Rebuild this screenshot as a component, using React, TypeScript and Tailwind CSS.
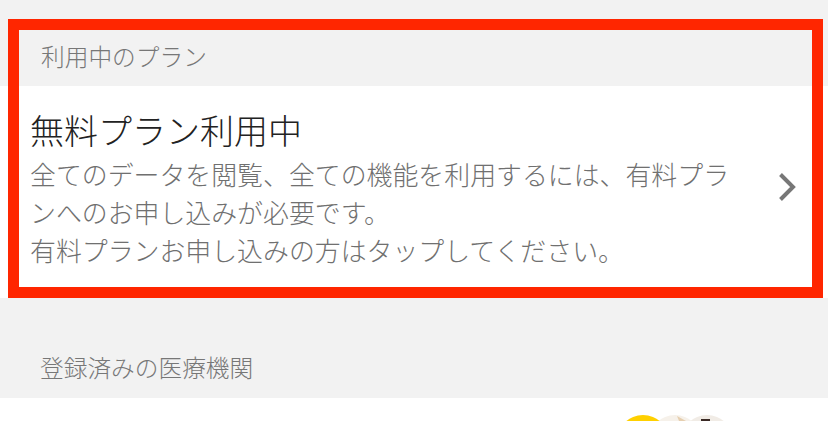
const jp = "font-['Noto_Sans_CJK_JP','Noto_Sans',sans-serif]";

export default function App() {
  return (
    <div className={`relative h-[421px] w-[828px] overflow-hidden bg-[#f2f2f2] ${jp}`}>
      <h2 className="h-[86px] pt-[38px] pl-[41px] text-[23.7px] leading-[36px] font-light text-[#777777]">利用中のプラン</h2>
      <div className="flex h-[212px] items-center bg-white pl-[30px]">
        <div className="min-w-0 flex-1 pb-[8px]">
          <p className="text-[34px] leading-[44px] font-light text-[#222222]">無料プラン利用中</p>
          <p className="mt-[3px] w-[702px] text-[25.9px] leading-[38px] font-light text-[#707070]">
            全てのデータを閲覧、全ての機能を利用するには、有料プランへのお申し込みが必要です。<br />
            有料プランお申し込みの方はタップしてください。
          </p>
        </div>
        <svg className="mr-[32px] mb-[10px] h-[28px] w-[17px] text-[#777777]" viewBox="0 0 17 28" fill="none" stroke="currentColor" strokeWidth="4">
          <path d="M1.5 1.5L14 14L1.5 26.5" />
        </svg>
      </div>
      <h2 className="h-[100px] pt-[51px] pl-[40px] text-[23.7px] leading-[36px] font-light text-[#777777]">登録済みの医療機関</h2>
      <div className="flex h-[23px] justify-end overflow-hidden bg-white pt-[17px] pr-[95px]">
        <svg className="h-[6px] w-[116px]" viewBox="0 0 116 6">
          <circle cx="90" cy="26" r="26" fill="#f1ece6" />
          <circle cx="58" cy="26" r="26" fill="#f6f1ea" />
          <path d="M60 1l9 5h-7z" fill="#e6cfb0" />
          <rect x="84" y="4" width="9" height="2" fill="#3a2a25" />
          <circle cx="26" cy="26" r="26" fill="#ffd000" />
        </svg>
      </div>
      {/* red annotation frame over the plan row */}
      <div className="pointer-events-none absolute top-[19px] left-[8px] h-[279px] w-[815px] border-[11.5px] border-[#ff2600]" />
    </div>
  );
}
